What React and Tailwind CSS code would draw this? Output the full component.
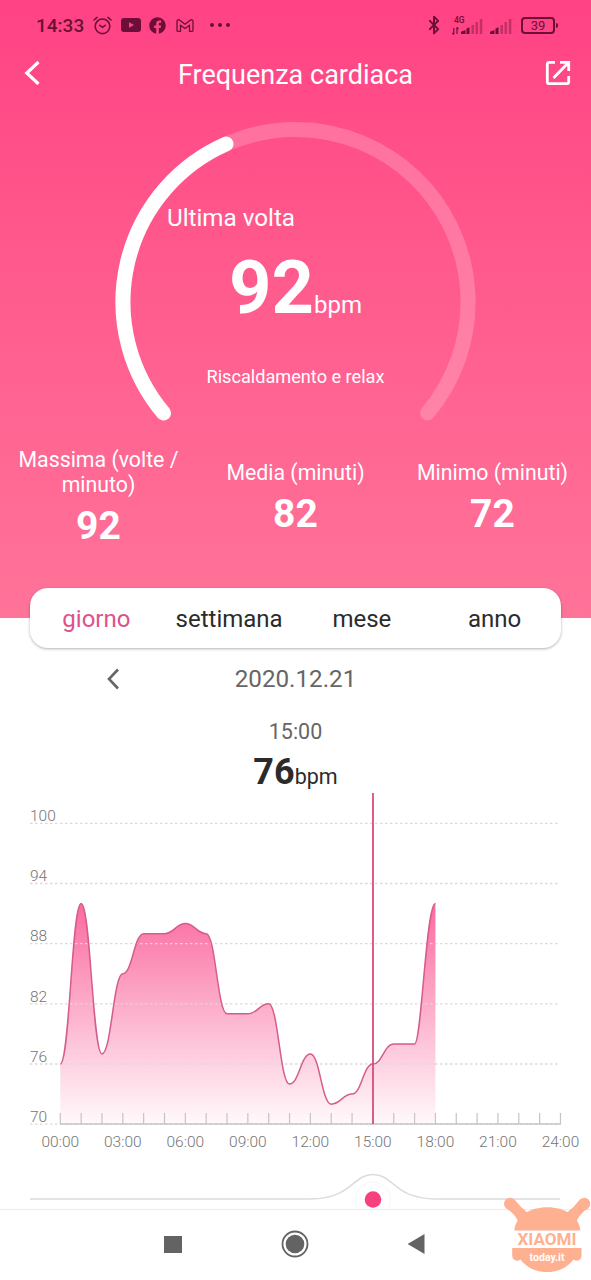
import { Bluetooth } from 'lucide-react';
import { FaFacebook } from 'react-icons/fa';

const tabs = ['giorno', 'settimana', 'mese', 'anno'];

const stats = [
  { label: 'Massima (volte / minuto)', value: 92 },
  { label: 'Media (minuti)', value: 82 },
  { label: 'Minimo (minuti)', value: 72 },
];

const readings = [76, 92, 77, 85, 89, 89, 90, 89, 81, 81, 82, 74, 77, 72, 73, 76, 78, 78, 92];
const levels = [100, 94, 88, 82, 76, 70];
const hours = Array.from({ length: 25 }, (_, hour) => hour);

const toX = (hour) => 60.3 + hour * 20.84;
const toY = (bpm) => 30.3 + (100 - bpm) * 10.03;

const buildLine = () =>
  readings.reduce((path, bpm, hour) => {
    if (hour === 0) {
      return `M${toX(0)} ${toY(bpm)}`;
    }
    const bend = 20.84 * 0.45;
    const start = hour === 18 ? 7 : bend;
    return `${path} C${toX(hour - 1) + start} ${toY(readings[hour - 1])} ${toX(hour) - bend} ${toY(bpm)} ${toX(hour)} ${toY(bpm)}`;
  }, '');

const Signal = ({ className }) => (
  <svg className={className} viewBox="0 0 22 16" fill="currentColor">
    <path d="M0 16v-2.200L4.500 12v4z" />
    <path d="M5.500 16v-5.500l3-1.200V16z" />
    <g opacity="0.4">
      <rect x="10.500" y="7" width="2.500" height="9" />
      <rect x="14.500" y="4" width="2.500" height="12" />
      <rect x="18.800" y="1" width="2.500" height="15" />
    </g>
  </svg>
);

const StatusBar = () => (
  <div className="flex h-[50px] items-center pl-9 pr-[33px] text-[#6b0f38]">
    <span className="w-[57px] text-[19px] font-medium leading-none">14:33</span>
    <svg className="h-[19px] w-[19px]" viewBox="0 0 19 19" fill="none" stroke="currentColor" strokeWidth="1.600" strokeLinecap="round">
      <circle cx="9.500" cy="10.300" r="7.300" />
      <path d="M6.800 9.300l2.700 2 2.700-2M1 4l3-2.600M18 4l-3-2.600" />
    </svg>
    <svg className="ml-[9px] h-[14px] w-5" viewBox="0 0 20 14">
      <rect width="20" height="14" rx="3" fill="currentColor" />
      <path d="M8 4.200v5.600L13 7z" fill="#ff4585" />
    </svg>
    <FaFacebook className="ml-2 h-[17px] w-[17px]" />
    <svg className="ml-2.5 h-[13px] w-[18px]" viewBox="0 0 18 13" fill="none" stroke="currentColor" strokeWidth="1.300" strokeLinejoin="round">
      <path d="M1 11.500V2.300C1 .8 2.800.3 3.800 1.200L9 5.200l5.200-4C15.200.3 17 .8 17 2.300v9.200c0 .5-.3.800-.8.800h-2.700V6.200L9 9.600 4.500 6.200v6.100H1.800c-.5 0-.8-.3-.8-.8z" />
    </svg>
    <div className="ml-4 flex gap-1">
      <i className="h-1 w-1 rounded-full bg-current" />
      <i className="h-1 w-1 rounded-full bg-current" />
      <i className="h-1 w-1 rounded-full bg-current" />
    </div>
    <Bluetooth className="ml-auto h-5 w-5" strokeWidth={2.4} />
    <div className="ml-2 flex h-[19px] items-end">
      <div className="relative h-[19px] w-[9px]">
        <span className="absolute left-0.5 top-0 text-[8.500px] font-medium leading-[9px]">4G</span>
        <svg className="absolute bottom-0 h-2 w-[7px]" viewBox="0 0 7 8" fill="none" stroke="currentColor" strokeWidth="1.200">
          <path d="M1.800 1v6.500M.3 6l1.500 1.500M5 7V.5L6.500 2" />
        </svg>
      </div>
      <Signal className="mb-px h-[16px] w-[22px]" />
      <Signal className="mb-px ml-[7px] h-[16px] w-[22px]" />
    </div>
    <div className="ml-[9px] flex items-center">
      <div className="flex h-[17px] w-[34px] items-center justify-center rounded-[4px] border-2 border-current text-[13px] leading-none">39</div>
      <i className="ml-px h-[5px] w-[2px] rounded-r-sm bg-current" />
    </div>
  </div>
);

const TitleBar = () => (
  <div className="flex h-12 items-center justify-between pl-6 pr-5">
    <svg className="mb-0.5 h-6 w-4" viewBox="0 0 16 24" fill="none" stroke="currentColor" strokeWidth="3.200">
      <path d="M14.500 1L2.800 12l11.700 11" />
    </svg>
    <h1 className="ml-1.5 mt-0.5 text-[27px] leading-none">Frequenza cardiaca</h1>
    <svg className="mb-0.5 h-[26px] w-[26px]" viewBox="0 0 26 26" fill="none" stroke="currentColor" strokeWidth="2.800">
      <path d="M10 2.300H4.300a2 2 0 0 0-2 2v17.400a2 2 0 0 0 2 2h17.400a2 2 0 0 0 2-2V16M8.500 18L23 3M15 2.300h8.700V11" />
    </svg>
  </div>
);

const Gauge = () => (
  <div className="grid h-[349px]">
    <svg className="col-start-1 row-start-1 h-[349px] w-[591px]" viewBox="0 98 591 349" fill="none" strokeWidth="15" strokeLinecap="round">
      <path d="M163.500 413A172.500 172.500 0 1 1 427.500 413" stroke="#fff" strokeOpacity="0.200" />
      <path d="M163.500 413A172.500 172.500 0 0 1 226 144" stroke="#fff" />
    </svg>
    <div className="col-start-1 row-start-1 flex flex-col pt-[105px]">
      <p className="pl-[167px] text-[24.200px] leading-[30px]">Ultima volta</p>
      <p className="mt-[15px] flex h-20 items-baseline justify-center">
        <span className="text-[74px] font-bold leading-[80px]">92</span>
        <span className="text-[24px] leading-none">bpm</span>
      </p>
      <p className="mt-[37px] text-center text-[18.150px] leading-6">Riscaldamento e relax</p>
    </div>
  </div>
);

const Chart = () => {
  const line = buildLine();

  return (
    <svg className="h-[372px] w-full shrink-0" viewBox="0 0 591 372" fontSize="15" fontWeight="300">
      <defs>
        <linearGradient id="fade" x1="0" y1="110" x2="0" y2="331" gradientUnits="userSpaceOnUse">
          <stop offset="0" stopColor="#fb6a9f" />
          <stop offset="1" stopColor="#fff9fb" />
        </linearGradient>
      </defs>
      <path d={`${line} V331 H${toX(0)} Z`} fill="url(#fade)" />
      {levels.map((bpm) => (
        <g key={bpm}>
          <line x1="30" x2="560" y1={toY(bpm)} y2={toY(bpm)} stroke="#dadada" strokeWidth="1.300" strokeDasharray="2.500 2.500" />
          <text x="30" y={toY(bpm) - 2.3} fontSize="15.500" fill="#757575">{bpm}</text>
        </g>
      ))}
      <path d={line} fill="none" stroke="#d65c8b" strokeWidth="1.500" />
      <line x1="60" x2="561" y1="331" y2="331" stroke="#c4c4c4" strokeWidth="1.300" />
      {hours.map((hour) => (
        <line key={hour} x1={toX(hour)} x2={toX(hour)} y1="320" y2="331" stroke="#c4c4c4" strokeWidth="1.200" />
      ))}
      {hours.filter((hour) => hour % 3 === 0).map((hour) => (
        <text key={hour} x={toX(hour)} y="354" textAnchor="middle" fontSize="15.500" fill="#757575">{`${String(hour).padStart(2, '0')}:00`}</text>
      ))}
      <line x1="373" x2="373" y1="0" y2="331" stroke="#d94c80" strokeWidth="1.800" />
    </svg>
  );
};

const HourSlider = () => (
  <svg className="h-11 w-full shrink-0" viewBox="0 0 591 44" fill="none">
    <path d="M30 34H310C352 34 352 9.500 373 9.500S394 34 436 34H560" stroke="#dcdcdc" strokeWidth="1.500" />
    <circle cx="373" cy="34.500" r="17.500" fill="#fff" stroke="#f6f6f6" />
    <circle cx="373" cy="34.500" r="8.300" fill="#f8407f" />
  </svg>
);

const NavBar = () => (
  <div className="flex h-[71px] items-center justify-center border-t border-[#ececec] pb-0.5 pr-0.5 text-[#636363]">
    <div className="flex w-[122px] justify-center">
      <i className="h-[17px] w-[18px] bg-current" />
    </div>
    <div className="flex w-[122px] justify-center">
      <svg className="h-[28px] w-[28px]" viewBox="0 0 28 28">
        <circle cx="14" cy="14" r="12.500" fill="none" stroke="currentColor" strokeWidth="1.800" />
        <circle cx="14" cy="14" r="9.300" fill="currentColor" />
      </svg>
    </div>
    <div className="flex w-[122px] justify-center">
      <svg className="h-5 w-[18px]" viewBox="0 0 18 20" fill="currentColor">
        <path d="M16.500 0v20L-.5 10z" />
      </svg>
    </div>
  </div>
);

const Watermark = () => (
  <svg className="absolute bottom-0 right-0 h-[90px] w-24" viewBox="0 0 96 90" fill="#ffb091">
    <circle cx="15" cy="13.700" r="6" />
    <path d="M11 18.200Q19 23 23 31L33 23Q25.500 17.500 19.600 9.800z" />
    <circle cx="89.300" cy="13.700" r="6" />
    <path d="M93.300 18.200Q85.300 23 81.500 31L71.500 23Q79 17.500 84.700 9.800z" />
    <path d="M19.300 40.500C20.500 26 35 17.300 52.300 17.300S84 26 85.300 40.500z" />
    <path d="M17.200 58H86.500v7C86.500 70.500 82 72 78.500 69.500C72 78 63 82 52 82S32 78 25.500 69.500C22 72 17.200 70.500 17.200 65z" />
    <text x="52" y="55" textAnchor="middle" fontSize="17" fontWeight="700" textLength="59" lengthAdjust="spacingAndGlyphs">XIAOMI</text>
    <text x="52" y="70.800" textAnchor="middle" fontSize="11.500" fontWeight="700" fill="#fff" textLength="35" lengthAdjust="spacingAndGlyphs">today.it</text>
  </svg>
);

const App = () => (
  <div className="relative flex h-[1280px] w-[591px] flex-col overflow-hidden bg-white font-[Roboto,sans-serif]">
    <header className="h-[618px] shrink-0 bg-linear-to-b from-[#ff4284] to-[#ff7399] text-white">
      <StatusBar />
      <TitleBar />
      <Gauge />
      <div className="grid grid-cols-3 items-center">
        {stats.map((stat) => (
          <div className="flex flex-col items-center gap-[7px] text-center" key={stat.label}>
            <p className="w-[170px] text-[21.300px] leading-[25px]">{stat.label}</p>
            <p className="text-[39px] font-bold leading-[45px]">{stat.value}</p>
          </div>
        ))}
      </div>
    </header>

    <div className="z-10 mx-[30px] -mt-[30px] grid h-[60px] shrink-0 grid-cols-4 items-center rounded-[18px] bg-white pt-0.5 text-center text-[24px] text-[#2b2b2b] shadow-[0_1px_3px_rgba(0,0,0,0.3)]">
      {tabs.map((tab) => (
        <button className={tab === 'giorno' ? 'text-[#e0508c]' : ''} key={tab} type="button">
          {tab}
        </button>
      ))}
    </div>

    <div className="mt-1.5 grid h-[50px] shrink-0 grid-cols-[1fr_130px_1fr] items-center text-[#666]">
      <svg className="ml-[105px] h-[22px] w-4" viewBox="0 0 16 22" fill="none" stroke="currentColor" strokeWidth="2.600">
        <path d="M13 1.500L4 11l9 9.500" />
      </svg>
      <span className="text-center text-[24.200px] leading-none">2020.12.21</span>
    </div>
    <p className="mt-4 text-center text-[21.500px] leading-6 text-[#666]">15:00</p>
    <p className="mt-2 flex h-[41px] shrink-0 items-baseline justify-center text-[#2b2b2b]">
      <span className="text-[36px] font-bold leading-10">76</span>
      <span className="text-[21.500px] leading-none">bpm</span>
    </p>

    <Chart />
    <HourSlider />
    <NavBar />
    <Watermark />
  </div>
);

export default App;
